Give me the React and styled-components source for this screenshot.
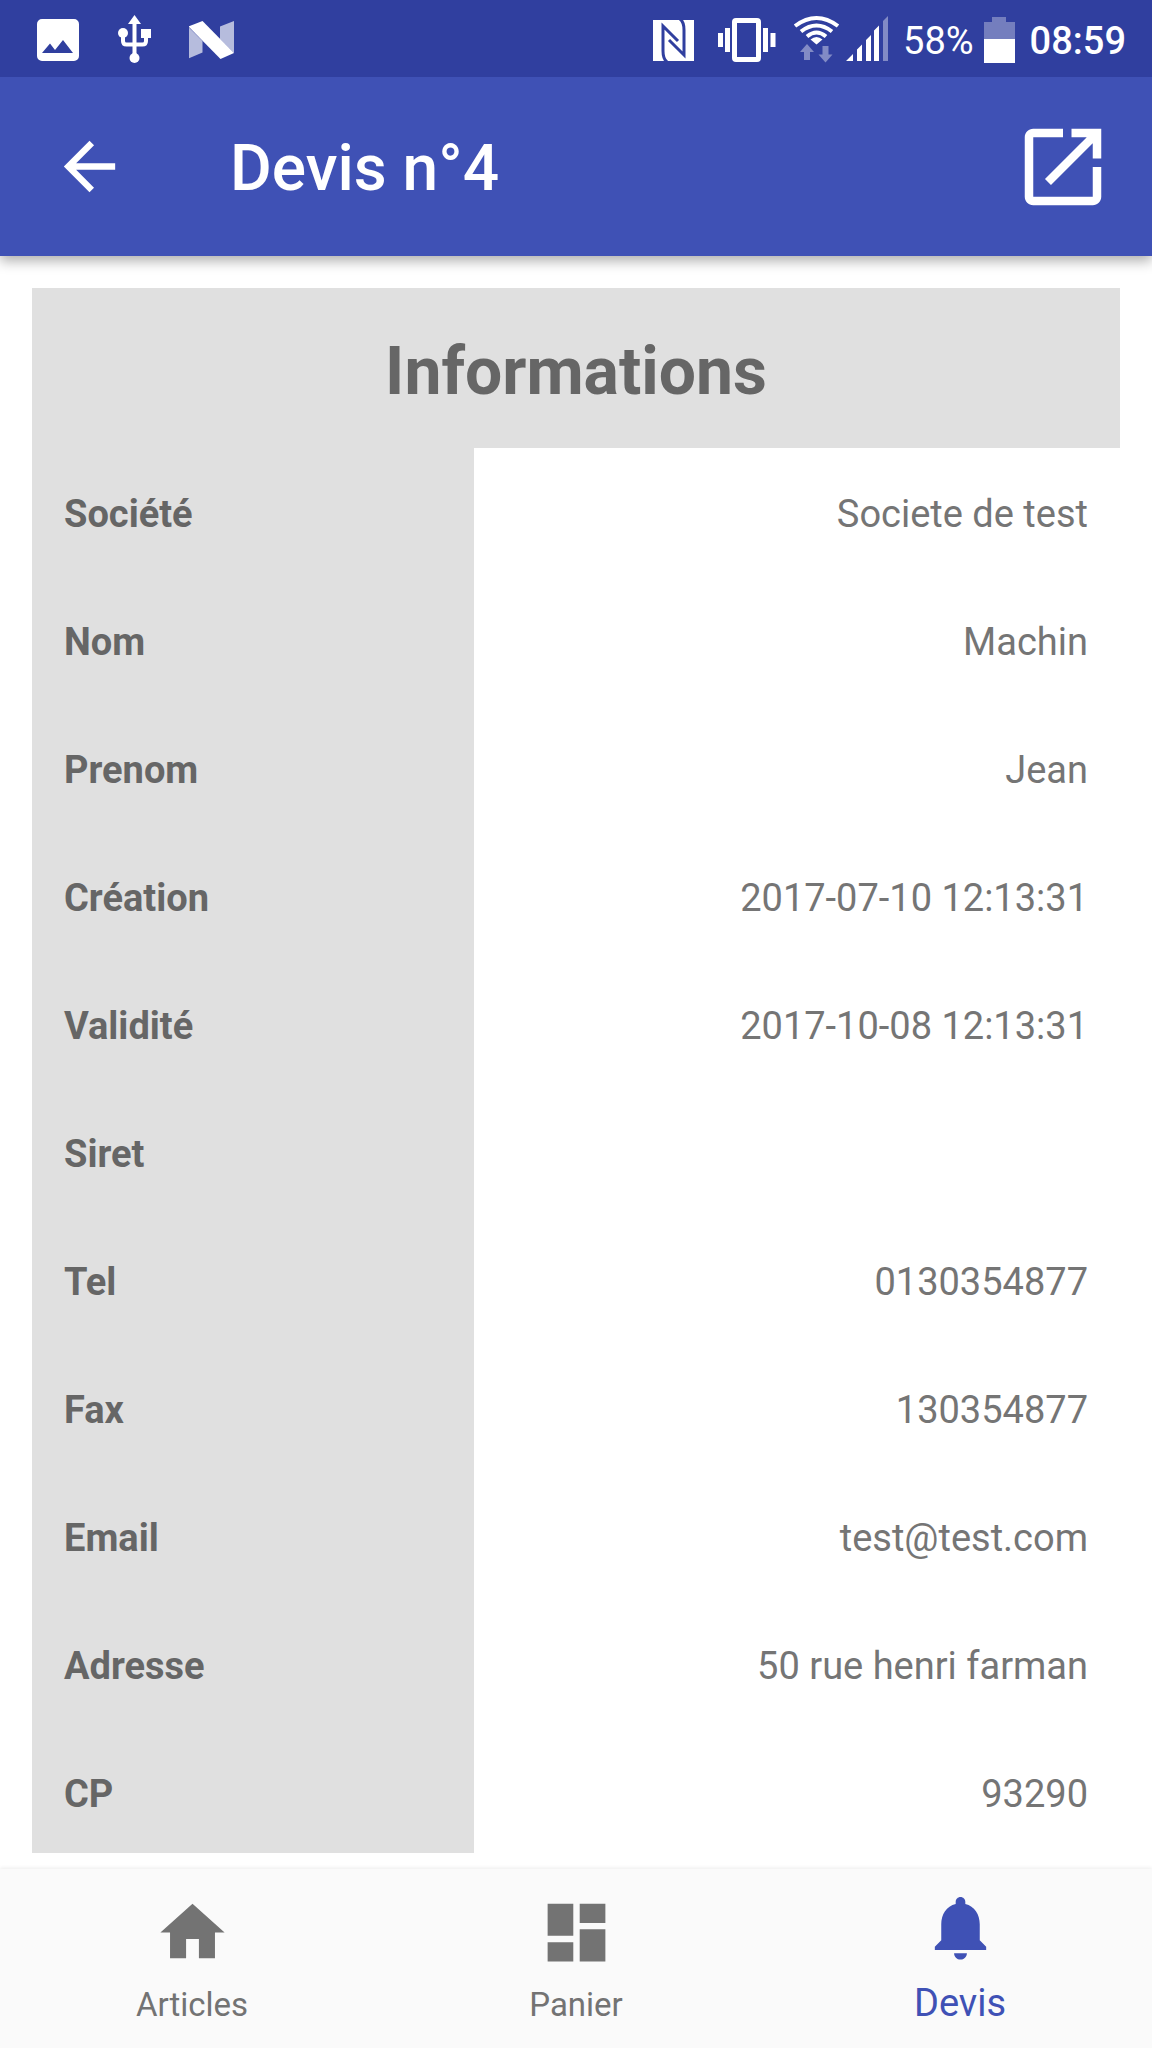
import React from "react";
import styled, { createGlobalStyle } from "styled-components";

const GlobalStyle = createGlobalStyle`
  * { box-sizing: border-box; }
  body {
    margin: 0;
    background: #ffffff;
    font-family: Roboto, "Noto Sans", sans-serif;
  }
`;

const Screen = styled.div`
  display: flex;
  flex-direction: column;
  height: 100vh;
`;

const StatusBar = styled.div`
  position: relative;
  z-index: 1;
  display: flex;
  flex: none;
  align-items: center;
  justify-content: space-between;
  height: 77px;
  padding: 0 26px 0 37px;
  background: #303f9f;
  color: #ffffff;
`;

const StatusGroup = styled.div`
  display: flex;
  align-items: center;
  gap: ${(p) => p.$gap}px;
`;

const StatusText = styled.span`
  padding-top: 4px;
  font-size: 38px;
  line-height: 44px;
  font-weight: ${(p) => (p.$strong ? 500 : 400)};
`;

const StatusGlyph = styled.svg`
  display: block;
  flex: none;
  height: 49px;
  fill: currentColor;
`;

const AppBar = styled.header`
  position: relative;
  display: flex;
  flex: none;
  align-items: center;
  height: 179px;
  padding: 0 38px 0 51px;
  background: #3f51b5;
  color: #ffffff;
  box-shadow: 0 5px 12px rgba(0, 0, 0, 0.32);
`;

const IconButton = styled.button`
  display: block;
  padding: 0;
  border: 0;
  background: none;
  color: inherit;
  cursor: pointer;
`;

const Icon = styled.svg`
  display: block;
  width: ${(p) => p.$size}px;
  height: ${(p) => p.$size}px;
  fill: currentColor;
`;

const Title = styled.h1`
  flex: 1;
  margin: 0 0 0 102px;
  padding-top: 4px;
  font-size: 64px;
  line-height: 76px;
  font-weight: 500;
`;

const Content = styled.main`
  flex: 1;
  min-height: 0;
  padding: 32px 32px 16px;
`;

const Scroller = styled.div`
  height: 100%;
  overflow: hidden;
`;

const InfoTable = styled.table`
  width: 100%;
  border-collapse: collapse;
  table-layout: fixed;
  font-size: 38px;
  line-height: 44px;
`;

const LabelColumn = styled.col`
  width: 442px;
`;

const TableHeading = styled.th`
  height: 160px;
  padding: 8px 32px 0;
  background: #e0e0e0;
  color: #666666;
  font-size: 66px;
  line-height: 76px;
  font-weight: 700;
  text-align: center;
`;

const Label = styled.th`
  height: 128px;
  padding: 4px 32px 0;
  background: #e0e0e0;
  color: #666666;
  font-weight: 700;
  text-align: left;
`;

const Value = styled.td`
  height: 128px;
  padding: 4px 32px 0;
  color: #757575;
  text-align: right;
`;

const BottomNav = styled.nav`
  position: relative;
  display: flex;
  flex: none;
  height: 179px;
  background: #fafafa;
  box-shadow: 0 -1px 4px rgba(0, 0, 0, 0.08);
`;

const NavItem = styled.button`
  display: flex;
  flex: 1;
  flex-direction: column;
  align-items: center;
  gap: ${(p) => (p.$active ? 15 : 12)}px;
  padding: ${(p) => (p.$active ? 20 : 25)}px 0 0;
  border: 0;
  background: none;
  color: ${(p) => (p.$active ? "#3f51b5" : "#737373")};
  font-family: inherit;
  font-size: ${(p) => (p.$active ? 38 : 33)}px;
  line-height: 44px;
  cursor: pointer;
`;

const rows = [
  ["Société", "Societe de test"],
  ["Nom", "Machin"],
  ["Prenom", "Jean"],
  ["Création", "2017-07-10 12:13:31"],
  ["Validité", "2017-10-08 12:13:31"],
  ["Siret", ""],
  ["Tel", "0130354877"],
  ["Fax", "130354877"],
  ["Email", "test@test.com"],
  ["Adresse", "50 rue henri farman"],
  ["CP", "93290"],
];

const tabs = [
  { label: "Articles", path: "M10 20v-6h4v6h5v-8h3L12 3 2 12h3v8z" },
  {
    label: "Panier",
    path: "M3 13h8V3H3v10zm0 8h8v-6H3v6zm10 0h8V11h-8v10zm0-18v6h8V3h-8z",
  },
  {
    label: "Devis",
    active: true,
    path: "M12 22c1.1 0 2-.9 2-2h-4c0 1.1.89 2 2 2zm6-6v-5c0-3.07-1.64-5.64-4.5-6.32V4c0-.83-.67-1.5-1.5-1.5s-1.5.67-1.5 1.5v.68C7.63 5.36 6 7.92 6 11v5l-2 2v1h16v-1l-2-2z",
  },
];

function NotificationGlyphs() {
  return (
    <StatusGroup $gap={38}>
      <StatusGlyph viewBox="37 14 42 49" width="42" aria-hidden="true">
        <path
          fillRule="evenodd"
          d="M42 19h32a5 5 0 0 1 5 5v32a5 5 0 0 1-5 5H42a5 5 0 0 1-5-5V24a5 5 0 0 1 5-5zM42 53h31L63 40l-8 10-5-6.500z"
        />
      </StatusGlyph>
      <StatusGlyph viewBox="117 14 34 49" width="34" aria-hidden="true">
        <path d="M134.500 15l6.500 9h-13zM141 29h10v9h-10z" />
        <circle cx="123" cy="33" r="5" />
        <circle cx="134.500" cy="58" r="5" />
        <path
          d="M134.500 22v33M123 35v6q0 3.500 3.500 3.500h16q3.500 0 3.500-3.500v-6"
          fill="none"
          stroke="currentColor"
          strokeWidth="4"
        />
      </StatusGlyph>
      <StatusGlyph viewBox="189 14 46 49" width="46" aria-hidden="true">
        <path d="M188.500 27l14 14v11.500l-14 6zM220 26.500l14-5.500v32l-14-14z" opacity=".65" />
        <path d="M188.500 26.500l14-5.500L234 53l-13.500 6z" />
      </StatusGlyph>
    </StatusGroup>
  );
}

function SystemGlyphs() {
  return (
    <StatusGroup $gap={15}>
      <StatusGroup $gap={24}>
        <StatusGlyph viewBox="652 14 41 49" width="41" aria-hidden="true">
          <path d="M652 20h41v41h-41z" />
          <path
            d="M666 62Q662 59 662 51V26l15 15M679 19Q683 22 683 30v25L668 40"
            fill="none"
            stroke="#303f9f"
            strokeWidth="3"
          />
        </StatusGlyph>
        <StatusGlyph viewBox="717 14 58 49" width="58" aria-hidden="true">
          <rect
            x="733.500"
            y="20.500"
            width="24"
            height="39"
            rx="1.500"
            fill="none"
            stroke="currentColor"
            strokeWidth="5"
          />
          <path d="M717 33h5v14h-5zM724 28h5v24h-5zM762 28h5v24h-5zM769.500 33h5v14h-5z" />
        </StatusGlyph>
      </StatusGroup>
      <StatusGroup $gap={6}>
        <StatusGlyph viewBox="792 14 49 49" width="49" aria-hidden="true">
          <path
            d="M796 26q21.500-16 43 0M802 31.500q15.500-12 31 0M808 36.500q9.500-8 19 0"
            fill="none"
            stroke="currentColor"
            strokeWidth="4"
          />
          <path d="M811.500 39.500q6-5 12 0l-6 5z" />
          <path
            d="M808 44l7 8h-4v8h-6v-8h-4zM823.500 46h6v8.500h4l-7 8-7-8h4z"
            opacity=".4"
          />
        </StatusGlyph>
        <StatusGlyph viewBox="846 14 42 49" width="42" aria-hidden="true">
          <path d="M846 61l7-7v7zM857 49.500l5-5V61h-5zM866 40l5-5v26h-5zM874 30.500l5-5V61h-5z" />
          <path d="M883 21l5-5v45h-5z" opacity=".4" />
        </StatusGlyph>
      </StatusGroup>
      <StatusGroup $gap={10}>
        <StatusText>58%</StatusText>
        <StatusGlyph viewBox="983 14 31 49" width="31" aria-hidden="true">
          <path d="M983 22h8v-5h14v5h9v17h-31z" opacity=".33" />
          <path d="M983 39h31v24h-31z" />
        </StatusGlyph>
      </StatusGroup>
      <StatusText $strong>08:59</StatusText>
    </StatusGroup>
  );
}

export default function App() {
  return (
    <Screen>
      <GlobalStyle />
      <StatusBar>
        <NotificationGlyphs />
        <SystemGlyphs />
      </StatusBar>
      <AppBar>
        <IconButton type="button" aria-label="Retour">
          <Icon $size={77} viewBox="0 0 24 24" aria-hidden="true">
            <path d="M20 11H7.830l5.590-5.590L12 4l-8 8 8 8 1.410-1.410L7.830 13H20v-2z" />
          </Icon>
        </IconButton>
        <Title>Devis n°4</Title>
        <IconButton type="button" aria-label="Ouvrir">
          <Icon $size={102} viewBox="0 0 24 24" aria-hidden="true">
            <path d="M19 19H5V5h7V3H5c-1.110 0-2 .9-2 2v14c0 1.100.89 2 2 2h14c1.100 0 2-.9 2-2v-7h-2v7zM14 3v2h3.590l-9.830 9.830 1.410 1.410L19 6.410V10h2V3h-7z" />
          </Icon>
        </IconButton>
      </AppBar>
      <Content>
        <Scroller>
          <InfoTable>
            <colgroup>
              <LabelColumn />
              <col />
            </colgroup>
            <thead>
              <tr>
                <TableHeading colSpan={2}>Informations</TableHeading>
              </tr>
            </thead>
            <tbody>
              {rows.map(([label, value]) => (
                <tr key={label}>
                  <Label scope="row">{label}</Label>
                  <Value>{value}</Value>
                </tr>
              ))}
            </tbody>
          </InfoTable>
        </Scroller>
      </Content>
      <BottomNav>
        {tabs.map((tab) => (
          <NavItem
            key={tab.label}
            type="button"
            $active={tab.active}
            aria-current={tab.active ? "page" : undefined}
          >
            <Icon $size={77} viewBox="0 0 24 24" aria-hidden="true">
              <path d={tab.path} />
            </Icon>
            <span>{tab.label}</span>
          </NavItem>
        ))}
      </BottomNav>
    </Screen>
  );
}
